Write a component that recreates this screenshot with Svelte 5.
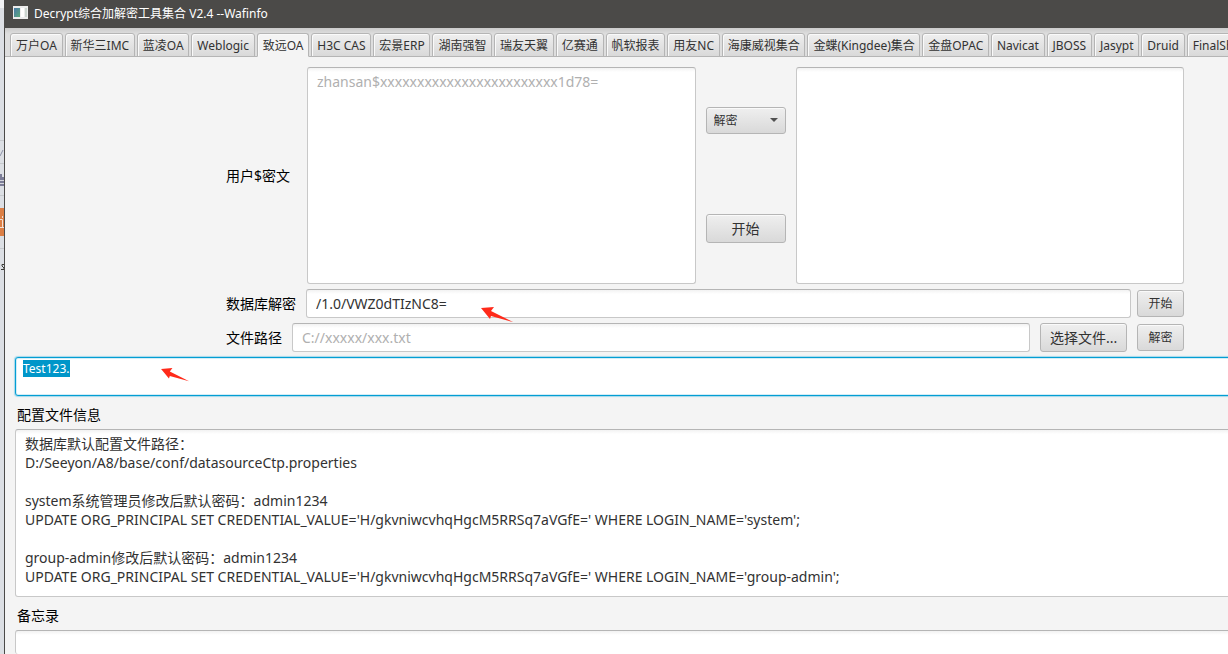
<script>
  import { onMount } from 'svelte';

  const tabs = [
    '万户OA', '新华三IMC', '蓝凌OA', 'Weblogic', '致远OA', 'H3C CAS', '宏景ERP',
    '湖南强智', '瑞友天翼', '亿赛通', '帆软报表', '用友NC', '海康威视集合',
    '金蝶(Kingdee)集合', '金盘OPAC', 'Navicat', 'JBOSS', 'Jasypt', 'Druid', 'FinalShell'
  ];
  let active = $state('致远OA');
  let cipher = $state('');
  let plain = $state('');
  let mode = $state('解密');
  let dbCipher = $state('/1.0/VWZ0dTIzNC8=');
  let filePath = $state('');
  let memo = $state('');
  let output;

  const config = [
    '数据库默认配置文件路径：',
    'D:/Seeyon/A8/base/conf/datasourceCtp.properties',
    '',
    'system系统管理员修改后默认密码：admin1234',
    "UPDATE ORG_PRINCIPAL SET CREDENTIAL_VALUE='H/gkvniwcvhqHgcM5RRSq7aVGfE=' WHERE LOGIN_NAME='system';",
    '',
    'group-admin修改后默认密码：admin1234',
    "UPDATE ORG_PRINCIPAL SET CREDENTIAL_VALUE='H/gkvniwcvhqHgcM5RRSq7aVGfE=' WHERE LOGIN_NAME='group-admin';"
  ].join('\n');

  onMount(() => {
    output.focus({ preventScroll: true });
    output.select();
  });
</script>

{#snippet arrow(width, height)}
  <svg class="arrow" {width} {height} viewBox="0 0 33 16" aria-hidden="true">
    <path d="M0 1 L13 0 L10 4 L32 15 L10 9 L9 12 Z" fill="#ff2a1a" />
  </svg>
{/snippet}

<div class="desktop">
  <svg class="behind" width="5" height="300" viewBox="0 0 5 300" aria-hidden="true">
    <path d="M0 0H5V8H0Z" fill="#f1f2f4" />
    <path d="M0 140.5H4M0 163.5H4M0 195.5H4M0 248.5H4" stroke="#c6c9cd" />
    <path d="M0 156L3 150" stroke="#8d93a8" fill="none" />
    <path d="M0 174H2V177H4V186H0Z" fill="#7c7d97" />
    <path d="M0 180.5H4M0 183.5H4" stroke="#d5d6dd" />
    <path d="M0 208H4V236H0Z" fill="#dc7f45" />
    <path d="M0 219.5H2.5V227M0 227.5H4M2.5 216V218" stroke="#f4e0d4" fill="none" />
    <path d="M4 264.5H2V266L4 268V269.5H1" stroke="#3b3a35" fill="none" />
  </svg>

  <main class="window">
    <header class="titlebar">
      <svg width="15" height="13" viewBox="0 0 15 13" aria-hidden="true">
        <defs>
          <linearGradient id="pane" x1="0" y1="0" x2="1" y2="1">
            <stop offset="0" stop-color="#4a78a8" />
            <stop offset="1" stop-color="#5aa87c" />
          </linearGradient>
        </defs>
        <rect width="15" height="13" fill="#ececec" />
        <rect x="1" y="2" width="6" height="9" fill="url(#pane)" />
        <rect x="8" y="2" width="3" height="9" fill="#fff" />
        <rect x="12" y="2" width="2" height="9" fill="#cbd5cf" />
      </svg>
      <h1>Decrypt综合加解密工具集合 V2.4 --Wafinfo</h1>
    </header>

    <nav class="tabs" role="tablist">
      {#each tabs as tab}
        <button class="tab" class:active={tab === active} role="tab" aria-selected={tab === active} onclick={() => (active = tab)}>{tab}</button>
      {/each}
    </nav>

    <section class="form">
      <div class="row top">
        <label for="cipher">用户$密文</label>
        <textarea id="cipher" class="field area" placeholder="zhansan$xxxxxxxxxxxxxxxxxxxxxxxx1d78=" bind:value={cipher}></textarea>
        <div class="actions">
          <div class="combo">
            <select class="btn small" aria-label="解密" bind:value={mode}>
              <option>解密</option>
            </select>
            <svg class="chevron" width="8" height="4" viewBox="0 0 8 4" aria-hidden="true"><path d="M0 0H8L4 4Z" fill="#505050" /></svg>
          </div>
          <button class="btn">开始</button>
        </div>
        <textarea class="field area" aria-label="开始" bind:value={plain}></textarea>
      </div>
      <div class="row db">
        <label for="db">数据库解密</label>
        <div class="marked grow">
          <input id="db" class="field line" bind:value={dbCipher} />
          {@render arrow(33, 16)}
        </div>
        <button class="btn small">开始</button>
      </div>
      <div class="row file">
        <label for="file">文件路径</label>
        <input id="file" class="field line grow" placeholder="C://xxxxx/xxx.txt" bind:value={filePath} />
        <button class="btn choose">选择文件...</button>
        <button class="btn small">解密</button>
      </div>
    </section>

    <section class="panels">
      <div class="marked result">
        <textarea class="output" aria-label="Test123." readonly bind:this={output}>Test123.</textarea>
        {@render arrow(29, 14)}
      </div>
      <label for="config">配置文件信息</label>
      <textarea id="config" class="field config" rows="8" readonly value={config}></textarea>
      <label for="memo">备忘录</label>
      <textarea id="memo" class="field memo" bind:value={memo}></textarea>
    </section>
  </main>
</div>

<style>
  :global(body) {
    margin: 0;
    overflow: hidden;
  }
  .desktop {
    display: flex;
    height: 100vh;
    overflow: hidden;
    background: #dcdfe4;
    font-family: 'Noto Sans', 'Noto Sans CJK SC', sans-serif;
    font-size: 14px;
    color: #000;
  }
  .desktop *,
  .desktop {
    box-sizing: border-box;
  }
  .behind {
    flex: none;
    margin-right: -1px;
  }
  .window {
    flex: 1;
    min-width: 0;
    display: flex;
    flex-direction: column;
    background: #f4f4f4;
    border-left: 1px solid #4b4a48;
  }
  .titlebar {
    flex: none;
    display: flex;
    align-items: center;
    gap: 6px;
    height: 28px;
    padding: 0 8px 3px;
    background: #4b4a48;
    color: #fff;
  }
  h1 {
    margin: 0;
    font-size: 12px;
    font-weight: 400;
  }
  .tabs {
    flex: none;
    display: flex;
    align-items: flex-end;
    gap: 2px;
    height: 29px;
    margin-right: -24px;
    padding-left: 5px;
    overflow: hidden;
    background: linear-gradient(#cbcbcb, #dedede 6px, #dedede);
    box-shadow: inset 0 -1px #b5b5b5;
  }
  .tab {
    flex: 0 1 auto;
    min-width: 0;
    height: 24px;
    padding: 0 5px;
    border: 1px solid #b5b5b5;
    border-radius: 3px 3px 0 0;
    background: linear-gradient(#efefef, #d9d9d9);
    box-shadow: inset 1px 1px #fafafa;
    font: inherit;
    font-size: 12px;
    color: #323232;
    white-space: nowrap;
  }
  .tab.active {
    background: #f4f4f4;
    border-bottom-color: #f4f4f4;
  }
  .form {
    flex: none;
    display: flex;
    flex-direction: column;
    gap: 5px;
    padding: 10px 44px 5px 221px;
  }
  .row {
    display: flex;
    align-items: center;
  }
  .row label {
    flex: none;
    padding-bottom: 2px;
  }
  .top {
    gap: 10px;
  }
  .top label {
    width: 71px;
  }
  .area {
    flex: 1;
    min-width: 0;
    height: 217px;
  }
  .actions {
    flex: none;
    display: flex;
    flex-direction: column;
    gap: 80px;
    width: 80px;
    padding-bottom: 2px;
  }
  .db {
    gap: 6px;
  }
  .db label {
    width: 74px;
  }
  .file {
    gap: 10px;
  }
  .file label {
    width: 56px;
  }
  .grow {
    flex: 1;
    min-width: 0;
  }
  .field {
    display: block;
    margin: 0;
    padding: 4px 9px;
    border: 1px solid #c8c8c8;
    border-top-color: #b5b5b5;
    border-radius: 3px;
    background: linear-gradient(#f2f2f2, #fff 4px);
    font: inherit;
    line-height: 19px;
    color: #323232;
    resize: none;
    outline: none;
    overflow: hidden;
  }
  .field::placeholder {
    color: #b0b0b0;
    opacity: 1;
  }
  .line {
    width: 100%;
    height: 29px;
  }
  .btn {
    flex: none;
    height: 29px;
    padding: 0 9px 1px;
    border: 1px solid #b5b5b5;
    border-radius: 3px;
    background: linear-gradient(#efefef, #d9d9d9);
    box-shadow: inset 0 1px #fafafa;
    font: inherit;
    color: #323232;
  }
  .btn.small {
    height: 27px;
    font-size: 12px;
  }
  .row > .btn.small {
    width: 47px;
  }
  .choose {
    width: 87px;
    white-space: nowrap;
  }
  .combo {
    display: grid;
    align-items: center;
  }
  .combo select {
    grid-area: 1 / 1;
    width: 100%;
    padding: 0 7px;
    appearance: none;
  }
  .chevron {
    grid-area: 1 / 1;
    justify-self: end;
    margin-right: 8px;
    pointer-events: none;
  }
  .marked {
    position: relative;
  }
  .arrow {
    position: absolute;
    left: 175px;
    top: 18px;
  }
  .result .arrow {
    left: 146px;
    top: 11px;
  }
  .panels {
    flex: 1;
    min-height: 0;
    display: flex;
    flex-direction: column;
    margin-right: -4px;
    padding-left: 10px;
  }
  .panels label {
    flex: none;
    padding: 9px 2px 5px;
    line-height: 19px;
  }
  .output {
    display: block;
    width: 100%;
    height: 39px;
    margin: 0;
    padding: 3px 7px;
    border: 1px solid #039ed3;
    border-radius: 3px;
    background: #fff;
    box-shadow: 0 0 1px 1px #a5d9ec, inset 0 0 0 1px #d3edf7;
    font: inherit;
    font-size: 12px;
    line-height: 16px;
    color: #323232;
    resize: none;
    outline: none;
    overflow: hidden;
  }
  .output::selection {
    background: #0096c9;
    color: #fff;
  }
  .panels .field {
    width: 100%;
  }
  .config {
    flex: none;
    height: 168px;
    white-space: pre;
  }
  .memo {
    flex: 1;
    border-bottom: 0;
  }
</style>
